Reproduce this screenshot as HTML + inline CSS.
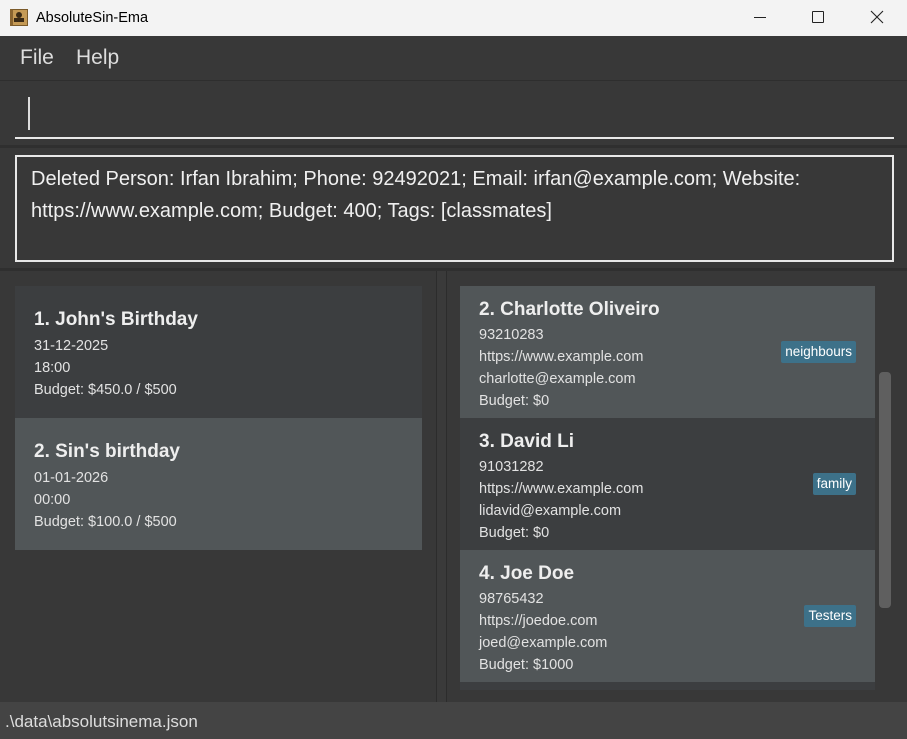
<!DOCTYPE html>
<html><head><meta charset="utf-8"><style>
*{margin:0;padding:0;box-sizing:border-box}
body{width:907px;height:739px;overflow:hidden;background:#383838;font-family:"Segoe UI","Liberation Sans",sans-serif;position:relative}
.a{position:absolute}
.title{left:0;top:0;width:907px;height:36px;background:#f3f3f3;color:#000;font-size:14px}
.menu{top:36px;left:0;width:907px;height:44px;background:#383838;color:#ddd;font-size:21px}
.card{position:absolute;color:#e6e6e6}
.card .n{position:absolute;left:19px;top:23px;font-size:19px;font-weight:bold;color:#eee}
.card .l{position:absolute;left:19px;font-size:14.5px;color:#e2e2e2}
.tag{position:absolute;right:19px;background:#3d7189;color:#fff;font-size:13.5px;padding:1px 4px;border-radius:2px;height:22px;line-height:20px}
</style></head><body>
<div class="a title">
 <div class="a" style="left:10px;top:9px;width:18px;height:17px;background:#c59a55;border:1px solid #7a5a2a;border-left:3px solid #8a6530"></div>
 <div class="a" style="left:16px;top:12px;width:6px;height:6px;border-radius:3px;background:#3a2a15"></div>
 <div class="a" style="left:14px;top:18px;width:10px;height:4px;background:#3a2a15"></div>
 <div class="a" style="left:36px;top:10px;font-size:14.5px">AbsoluteSin-Ema</div>
 <div class="a" style="left:754px;top:17px;width:12px;height:1px;background:#222"></div>
 <div class="a" style="left:812px;top:11px;width:12px;height:12px;border:1px solid #222;border-radius:1px"></div>
 <svg class="a" style="left:870px;top:10px" width="14" height="14"><path d="M1 1L13 13M13 1L1 13" stroke="#222" stroke-width="1.1"/></svg>
</div>
<div class="a menu"><span class="a" style="left:20px;top:10px">File</span><span class="a" style="left:76px;top:10px">Help</span></div>
<div class="a" style="left:0;top:80px;width:907px;height:1px;background:#2e2e2e"></div>
<div class="a" style="left:28px;top:97px;width:2px;height:33px;background:#ddd"></div>
<div class="a" style="left:15px;top:137px;width:879px;height:2px;background:#e8e8e8"></div>
<div class="a" style="left:0;top:145px;width:907px;height:3px;background:#2f2f2f"></div>
<div class="a" style="left:15px;top:155px;width:879px;height:107px;border:2px solid #e8e8e8;color:#f0f0f0;font-size:20px;line-height:32px;padding:6px 0 0 14px">Deleted Person: Irfan Ibrahim; Phone: 92492021; Email: irfan@example.com; Website:<br>https://www.example.com; Budget: 400; Tags: [classmates]</div>
<div class="a" style="left:0;top:268px;width:907px;height:3px;background:#2f2f2f"></div>
<div class="a" style="left:436px;top:271px;width:1px;height:431px;background:#2c2c2c"></div>
<div class="a" style="left:446px;top:271px;width:1px;height:431px;background:#2c2c2c"></div>
<div class="a" style="left:437px;top:271px;width:9px;height:431px;background:#3a3a3a"></div>

<div class="card" style="left:15px;top:286px;width:407px;height:132px;background:#3c3e40">
 <div class="n">1. John's Birthday</div><div class="l" style="top:52px">31-12-2025</div><div class="l" style="top:74px">18:00</div><div class="l" style="top:96px">Budget: $450.0 / $500</div></div>
<div class="card" style="left:15px;top:418px;width:407px;height:132px;background:#515658">
 <div class="n">2. Sin's birthday</div><div class="l" style="top:52px">01-01-2026</div><div class="l" style="top:74px">00:00</div><div class="l" style="top:96px">Budget: $100.0 / $500</div></div>

<div class="card" style="left:460px;top:286px;width:415px;height:132px;background:#515658">
 <div class="n" style="top:13px">2. Charlotte Oliveiro</div><div class="l" style="top:41px">93210283</div><div class="l" style="top:63px">https://www.example.com</div><div class="l" style="top:85px">charlotte@example.com</div><div class="l" style="top:107px">Budget: $0</div><div class="tag" style="top:55px">neighbours</div></div>
<div class="card" style="left:460px;top:418px;width:415px;height:132px;background:#3c3e40">
 <div class="n" style="top:13px">3. David Li</div><div class="l" style="top:41px">91031282</div><div class="l" style="top:63px">https://www.example.com</div><div class="l" style="top:85px">lidavid@example.com</div><div class="l" style="top:107px">Budget: $0</div><div class="tag" style="top:55px">family</div></div>
<div class="card" style="left:460px;top:550px;width:415px;height:132px;background:#515658">
 <div class="n" style="top:13px">4. Joe Doe</div><div class="l" style="top:41px">98765432</div><div class="l" style="top:63px">https://joedoe.com</div><div class="l" style="top:85px">joed@example.com</div><div class="l" style="top:107px">Budget: $1000</div><div class="tag" style="top:55px">Testers</div></div>
<div class="a" style="left:460px;top:682px;width:415px;height:8px;background:#3c3e40"></div>
<div class="a" style="left:879px;top:372px;width:12px;height:236px;background:#5f5f5f;border-radius:4px"></div>
<div class="a" style="left:0;top:702px;width:907px;height:37px;background:#444;color:#ddd;font-size:17px;padding:10px 0 0 5px">.\data\absolutsinema.json</div>
</body></html>
